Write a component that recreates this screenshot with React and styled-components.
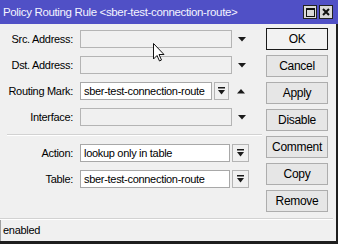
import React from "react";
import styled, { createGlobalStyle } from "styled-components";

const Global = createGlobalStyle`
  body {
    margin: 0;
    background: #f0f0f0;
    font-family: "Liberation Sans", Arial, sans-serif;
  }
  #root {
    width: 338px;
    height: 244px;
    overflow: hidden;
  }
`;

const Window = styled.div`
  position: relative;
  width: 338px;
  height: 244px;
  box-sizing: border-box;
  display: flex;
  flex-direction: column;
  background: #f0f0f0;
  border-right: 2px solid #1e1e1e;
  border-bottom: 3px solid #1e1e1e;
  font-size: 11px;
  letter-spacing: -0.3px;
  color: #000;
`;

const TitleBar = styled.div`
  height: 24px;
  flex: none;
  margin-right: -2px;
  display: flex;
  align-items: center;
  justify-content: space-between;
  padding: 0 5px 0 3px;
  background: #5050c6;
  color: #f4f4ff;
  font-size: 11.5px;
  letter-spacing: -0.35px;
`;

const TitleButtons = styled.div`
  display: flex;
  gap: 2px;
`;

const TitleButton = styled.div`
  width: 14px;
  height: 14px;
  box-sizing: border-box;
  border: 1px solid #222;
  background: #d8d8d8;
  display: flex;
  align-items: center;
  justify-content: center;
`;

const Body = styled.div`
  flex: 1;
  display: flex;
  align-items: flex-start;
`;

const Form = styled.div`
  width: 262px;
  padding-top: 6px;
  display: flex;
  flex-direction: column;
  gap: 8px;
`;

const Row = styled.div`
  display: flex;
  align-items: center;
  height: 18px;
`;

const Label = styled.div`
  width: 73px;
  margin-right: 7px;
  text-align: right;
  white-space: nowrap;
`;

const Field = styled.div`
  width: ${(p) => p.$w}px;
  height: 18px;
  box-sizing: border-box;
  border: 1px solid ${(p) => (p.$filled ? "#a8a8a8" : "#b4b4b4")};
  background: ${(p) => (p.$filled ? "#fff" : "#f0f0f0")};
  padding-left: 3px;
  line-height: 16px;
  white-space: nowrap;
  overflow: hidden;
`;

const DropButton = styled.div`
  width: ${(p) => p.$w}px;
  height: 18px;
  margin-left: 2px;
  box-sizing: border-box;
  border: 1px solid #b4b4b4;
  background: #f0f0f0;
  display: flex;
  align-items: center;
  justify-content: center;
`;

const Arrow = styled.svg`
  margin-left: ${(p) => p.$ml}px;
`;

const Separator = styled.div`
  height: 0;
  border-top: 1px solid #d2d2d2;
  border-bottom: 1px solid #fff;
  margin: 0 ${(p) => p.$mr || 0}px 0 ${(p) => p.$ml || 0}px;
`;

const FormSeparator = styled(Separator)`
  margin: 0 0 0 7px;
`;

const ButtonColumn = styled.div`
  width: 62px;
  margin-left: 4px;
  padding-top: 4px;
  display: flex;
  flex-direction: column;
  gap: 5px;
`;

const Button = styled.div`
  height: 22px;
  box-sizing: border-box;
  border: 1px solid ${(p) => (p.$default ? "#1a1a1a" : "#adadad")};
  background: ${(p) => (p.$default ? "#f2f2f2" : "#e6e6e6")};
  display: flex;
  align-items: center;
  justify-content: center;
  font-size: 12px;
`;

const StatusBar = styled.div`
  height: 21px;
  box-sizing: border-box;
  border-left: 1px solid #a0a0a0;
  padding-left: 2px;
  line-height: 20px;
`;

const Cursor = styled.svg`
  position: absolute;
  left: 153px;
  top: 43px;
`;

const Down = ({ ml }) => (
  <Arrow $ml={ml} width="8" height="5" viewBox="0 0 8 5">
    <polygon points="0,0 8,0 4,4.5" fill="#1a1a1a" />
  </Arrow>
);

const Up = ({ ml }) => (
  <Arrow $ml={ml} width="8" height="5" viewBox="0 0 8 5">
    <polygon points="0,4.5 8,4.5 4,0" fill="#1a1a1a" />
  </Arrow>
);

const BarDown = () => (
  <svg width="7" height="8" viewBox="0 0 7 8">
    <rect x="0" y="0" width="7" height="1.5" fill="#1a1a1a" />
    <polygon points="0,3 7,3 3.5,7.5" fill="#1a1a1a" />
  </svg>
);

const buttons = ["OK", "Cancel", "Apply", "Disable", "Comment", "Copy", "Remove"];

const App = () => {
  return (
    <Window>
      <Global />
      <TitleBar>
        <span>Policy Routing Rule &lt;sber-test-connection-route&gt;</span>
        <TitleButtons>
          <TitleButton>
            <svg width="9" height="9" viewBox="0 0 9 9">
              <rect x="0.5" y="0.5" width="8" height="8" fill="none" stroke="#111" />
              <rect x="0" y="0" width="9" height="2" fill="#111" />
            </svg>
          </TitleButton>
          <TitleButton>
            <svg width="8" height="8" viewBox="0 0 8 8">
              <path d="M1 1 L7 7 M7 1 L1 7" stroke="#111" strokeWidth="2" />
            </svg>
          </TitleButton>
        </TitleButtons>
      </TitleBar>
      <Body>
        <Form>
          <Row>
            <Label>Src. Address:</Label>
            <Field $w={152} />
            <Down ml={6} />
          </Row>
          <Row>
            <Label>Dst. Address:</Label>
            <Field $w={152} />
            <Down ml={6} />
          </Row>
          <Row>
            <Label>Routing Mark:</Label>
            <Field $w={132} $filled>sber-test-connection-route</Field>
            <DropButton $w={15}>
              <BarDown />
            </DropButton>
            <Up ml={8} />
          </Row>
          <Row>
            <Label>Interface:</Label>
            <Field $w={152} />
            <Down ml={6} />
          </Row>
          <FormSeparator />
          <Row>
            <Label>Action:</Label>
            <Field $w={150} $filled>lookup only in table</Field>
            <DropButton $w={17}>
              <BarDown />
            </DropButton>
          </Row>
          <Row>
            <Label>Table:</Label>
            <Field $w={150} $filled>sber-test-connection-route</Field>
            <DropButton $w={17}>
              <BarDown />
            </DropButton>
          </Row>
        </Form>
        <ButtonColumn>
          {buttons.map((b, i) => (
            <Button key={b} $default={i === 0}>
              {b}
            </Button>
          ))}
        </ButtonColumn>
      </Body>
      <Separator $mr={3} />
      <StatusBar>enabled</StatusBar>
      <Cursor width="12" height="19" viewBox="0 0 12 19">
        <path
          d="M0.5 0.5 L0.5 16 L4 12.5 L6.5 18 L8.5 17 L6 11.5 L11 11.5 Z"
          fill="#fff"
          stroke="#111"
          strokeWidth="1"
          strokeLinejoin="round"
        />
      </Cursor>
    </Window>
  );
};

export default App;
